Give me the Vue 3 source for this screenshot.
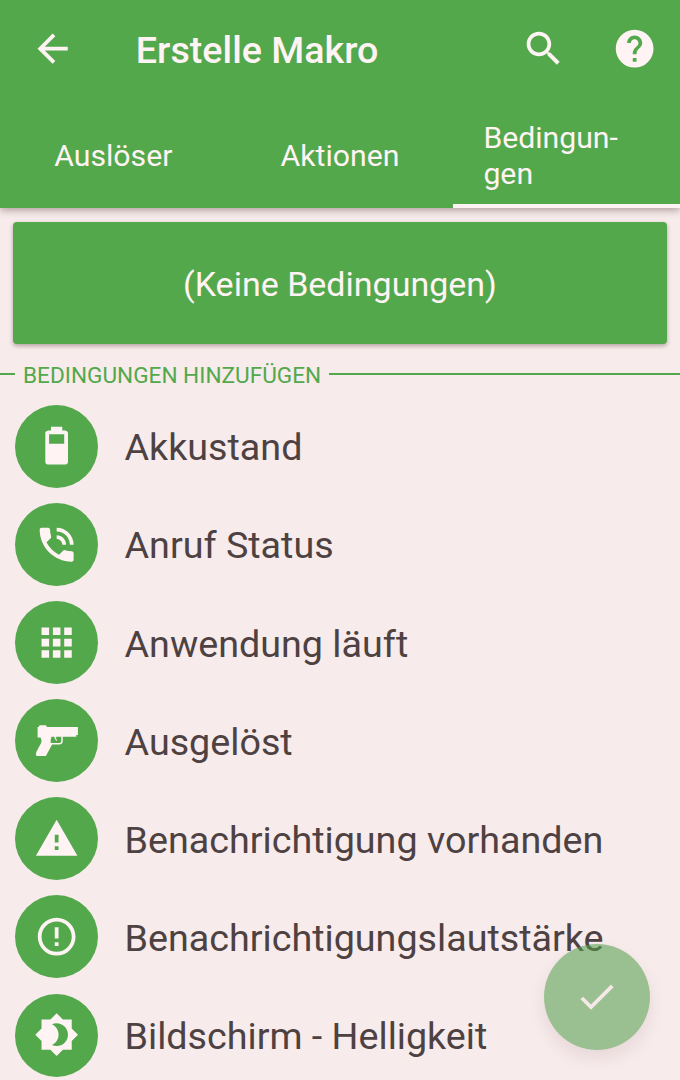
<template>
  <div class="screen">
    <header class="header">
      <div class="toolbar">
        <svg class="icon back" viewBox="0 0 24 24">
          <path d="M20 11H7.83l5.59-5.59L12 4l-8 8 8 8 1.41-1.41L7.83 13H20v-2z" />
        </svg>
        <h1 class="title">Erstelle Makro</h1>
        <svg class="icon search" viewBox="0 0 24 24">
          <path
            d="M15.5 14h-.79l-.28-.27C15.41 12.59 16 11.11 16 9.5 16 5.91 13.09 3 9.5 3S3 5.91 3 9.5 5.91 16 9.5 16c1.61 0 3.09-.59 4.23-1.57l.27.28v.79l5 4.99L20.49 19l-4.99-5zm-6 0C7.01 14 5 11.99 5 9.5S7.01 5 9.5 5 14 7.01 14 9.5 11.99 14 9.5 14z"
          />
        </svg>
        <svg class="icon" viewBox="0 0 24 24">
          <path
            d="M12 2C6.48 2 2 6.48 2 12s4.48 10 10 10 10-4.48 10-10S17.52 2 12 2zm1 17h-2v-2h2v2zm2.07-7.75l-.9.92C13.45 12.9 13 13.5 13 15h-2v-.5c0-1.1.45-2.1 1.17-2.83l1.24-1.26c.37-.36.59-.86.59-1.41 0-1.1-.9-2-2-2s-2 .9-2 2H8c0-2.21 1.79-4 4-4s4 1.79 4 4c0 .88-.36 1.68-.93 2.25z"
          />
        </svg>
      </div>
      <nav class="tabs">
        <button
          v-for="tab in tabs"
          :key="tab.id"
          class="tab"
          :class="{ active: tab.id === activeTab }"
          @click="activeTab = tab.id"
        >
          <span class="tab-label">{{ tab.label }}</span>
        </button>
      </nav>
    </header>

    <main>
      <div class="empty-card">
        <span class="empty-text">(Keine Bedingungen)</span>
      </div>

      <div class="divider">
        <span class="divider-text">BEDINGUNGEN HINZUFÜGEN</span>
      </div>

      <ul class="list">
        <li v-for="item in conditions" :key="item.label" class="row">
          <span class="badge">
            <svg class="icon" :viewBox="item.box || '0 0 24 24'">
              <path fill-rule="evenodd" :d="item.path" />
            </svg>
          </span>
          <span class="label">{{ item.label }}</span>
        </li>
      </ul>
    </main>

    <button class="fab">
      <svg class="icon" viewBox="0 0 24 24">
        <path d="M9 16.17L4.83 12l-1.42 1.41L9 19 21 7l-1.41-1.41z" />
      </svg>
    </button>
  </div>
</template>

<script setup>
import { ref } from "vue";

const activeTab = ref("conditions");

const tabs = [
  { id: "triggers", label: "Auslöser" },
  { id: "actions", label: "Aktionen" },
  { id: "conditions", label: "Bedingun-\ngen" },
];

const conditions = [
  {
    label: "Akkustand",
    path: "M15.67 4H15V2H9v2h-.67C7.6 4 6 4.1 6 5.33v15.33C6 21.4 6.6 22 7.33 22h9.33c.74 0 1.34-.6 1.34-1.33V5.33C18 4.2 16.5 4 15.67 4zM8 6h8v5H8z",
  },
  {
    label: "Anruf Status",
    path: "M20 15.5c-1.25 0-2.45-.2-3.57-.57-.1-.03-.21-.05-.31-.05-.26 0-.51.1-.71.29l-2.2 2.2c-2.83-1.44-5.15-3.75-6.59-6.59l2.2-2.21c.28-.26.36-.65.25-1C8.7 6.45 8.5 5.25 8.5 4c0-.55-.45-1-1-1H4c-.55 0-1 .45-1 1 0 9.39 7.61 17 17 17 .55 0 1-.45 1-1v-3.5c0-.55-.45-1-1-1zM19 12h2c0-4.97-4.03-9-9-9v2c3.87 0 7 3.13 7 7zm-4 0h2c0-2.76-2.24-5-5-5v2c1.66 0 3 1.34 3 3z",
  },
  {
    label: "Anwendung läuft",
    path: "M4 8h4V4H4v4zm6 12h4v-4h-4v4zm-6 0h4v-4H4v4zm0-6h4v-4H4v4zm6 0h4v-4h-4v4zm6-10v4h4V4h-4zm-6 4h4V4h-4v4zm6 6h4v-4h-4v4zm0 6h4v-4h-4v4z",
  },
  {
    label: "Ausgelöst",
    box: "0 0 45 45",
    path: "M3.6 9H4.6L5.6 7.3H11.8L13 9H43.6V17H42V18.7H28.6V22.5Q28.6 26.3 25.2 26.3H18L11.8 37.7H3Q1.7 37.7 1.9 35.5L2.5 33.2L7.2 24.5Q7.8 21 6.5 19.3H3.6ZM17.4 18.7L16.6 21.5V24.8H25Q27.1 24.8 27.1 22V18.7ZM20.2 18.7H22.2L21.8 20.4L23 22.2L22.6 22.9Q20.4 22 20.2 18.7Z",
  },
  {
    label: "Benachrichtigung vorhanden",
    path: "M1 21h22L12 2 1 21zm12-3h-2v-2h2v2zm0-4h-2v-4h2v4z",
  },
  {
    label: "Benachrichtigungslautstärke",
    path: "M11 15h2v2h-2zm0-8h2v6h-2zm.99-5C6.47 2 2 6.48 2 12s4.47 10 9.99 10C17.52 22 22 17.52 22 12S17.52 2 11.99 2zM12 20c-4.42 0-8-3.58-8-8s3.58-8 8-8 8 3.58 8 8-3.58 8-8 8z",
  },
  {
    label: "Bildschirm - Helligkeit",
    path: "M20 8.69V4h-4.69L12 .69 8.69 4H4v4.69L.69 12 4 15.31V20h4.69L12 23.31 15.31 20H20v-4.69L23.31 12 20 8.69zM12 18c-.89 0-1.74-.2-2.5-.55C11.56 16.5 13 14.42 13 12s-1.44-4.5-3.5-5.45C10.26 6.2 11.11 6 12 6c3.31 0 6 2.69 6 6s-2.69 6-6 6z",
  },
];
</script>

<style>
body {
  margin: 0;
  background: #f7ebeb;
}
</style>

<style scoped>
.screen {
  position: relative;
  height: 1080px;
  overflow: hidden;
  background: #f7ebeb;
  color: #fff3f3;
  font-family: Roboto, sans-serif;
}

button {
  border: none;
  padding: 0;
  color: inherit;
  font-family: inherit;
}

.icon {
  display: block;
  flex: none;
  width: 45.3px;
  height: 45.3px;
  fill: #fff3f3;
}

.header {
  position: relative;
  height: 207.5px;
  background: #53a84c;
  box-shadow: 0 2px 8px rgba(60, 30, 30, 0.4);
}

.toolbar {
  display: flex;
  align-items: center;
  height: 98px;
  padding: 0 22.5px 0 30px;
}

.title {
  flex: 1;
  margin: 2px 0 0 60.5px;
  font-size: 37.7px;
  font-weight: 500;
  line-height: 42px;
}

.search {
  margin-right: 45.5px;
}

.tabs {
  display: grid;
  grid-template-columns: repeat(3, 1fr);
  height: 109.5px;
}

.tab {
  display: flex;
  align-items: center;
  justify-content: center;
  border-bottom: 4px solid transparent;
  background: none;
}

.tab.active {
  border-bottom-color: #fff3f3;
}

.tab-label {
  padding-top: 10px;
  font-size: 30.2px;
  line-height: 36px;
  text-align: left;
  white-space: pre-line;
}

.active .tab-label {
  margin-right: 32px;
}

.empty-card {
  display: flex;
  align-items: center;
  justify-content: center;
  height: 122px;
  margin: 14.5px 13px 0;
  border-radius: 4px;
  background: #53a84c;
  box-shadow: 0 2px 4px rgba(60, 30, 30, 0.35);
}

.empty-text {
  padding-top: 2px;
  font-size: 34px;
}

.divider {
  display: flex;
  align-items: center;
  gap: 8px;
  height: 30px;
  margin-top: 15px;
  color: #53a84c;
}

.divider::before,
.divider::after {
  content: "";
  width: 15px;
  height: 2px;
  background: #53a84c;
}

.divider::after {
  flex: 1;
}

.divider-text {
  padding-top: 2px;
  font-size: 22.6px;
}

.list {
  margin: 8px 0 0;
  padding: 0;
  list-style: none;
}

.row {
  display: flex;
  align-items: center;
  height: 98.17px;
  padding-left: 15px;
}

.badge {
  display: flex;
  align-items: center;
  justify-content: center;
  width: 83px;
  height: 83px;
  border-radius: 50%;
  background: #53a84c;
}

.label {
  margin: 2.5px 0 0 26.5px;
  color: #4d4142;
  font-size: 37.7px;
  white-space: nowrap;
}

.fab {
  position: absolute;
  right: 30px;
  bottom: 30.5px;
  display: flex;
  align-items: center;
  justify-content: center;
  width: 106px;
  height: 106px;
  border-radius: 50%;
  background: rgba(83, 158, 76, 0.57);
  box-shadow: 0 8px 16px rgba(100, 50, 60, 0.1);
}

.fab .icon {
  fill: #f5e9e7;
}
</style>
